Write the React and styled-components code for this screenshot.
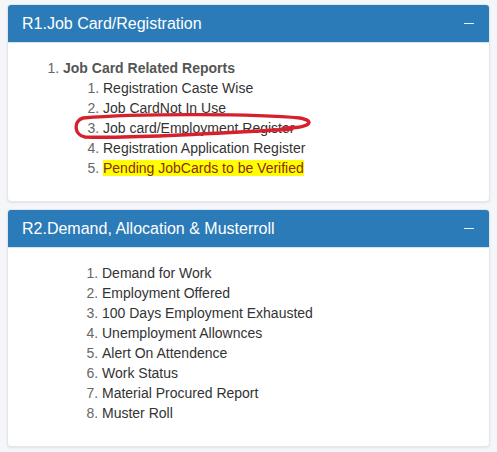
import React from 'react';
import styled, { createGlobalStyle } from 'styled-components';

const GlobalStyle = createGlobalStyle`
  body {
    margin: 0;
    background: #f4f6f9;
    font-family: "Liberation Sans", Arial, sans-serif;
    font-size: 14px;
    color: #333;
  }
`;

const Page = styled.div`
  padding: 4px 7px 4px 7px;
  display: flex;
  flex-direction: column;
  gap: 7px;
`;

const Panel = styled.div`
  background: #fff;
  border: 1px solid #e3e6ea;
  border-radius: 4px;
  box-shadow: 0 1px 2px rgba(0, 0, 0, 0.08);
  overflow: hidden;
`;

const Heading = styled.div`
  background: #2b7bb9;
  color: #fff;
  display: flex;
  align-items: center;
  justify-content: space-between;
  padding: 10px 15px 10px 14px;
  border-bottom: 1px solid #d6e4f0;
`;

const Title = styled.h3`
  margin: 0;
  font-size: 16px;
  font-weight: normal;
  line-height: 17px;
`;

const Minus = styled.span`
  display: block;
  width: 10px;
  height: 1px;
  background: #e8f1f8;
`;

const Body = styled.div`
  position: relative;
  padding: 15px 15px 23px 15px;
`;

const List = styled.ol`
  margin: 0;
  padding-left: ${(p) => p.$indent}px;
  line-height: 20px;
  li::marker {
    color: #666;
  }
`;

const Item = styled.li``;

const Group = styled.li`
  & > span {
    font-weight: bold;
    color: #555;
  }
`;

const Highlight = styled.span`
  background: #ffff00;
  color: #8b2a12;
`;

const Scribble = styled.svg`
  position: absolute;
  left: -8px;
  top: -42px;
  pointer-events: none;
`;

const RedCircle = () => (
  <Scribble width="497" height="200" viewBox="0 0 497 200">
    <path
      d="M 292 128 C 240 131, 130 138, 85 136 C 74 134, 73 120, 83 117 C 140 112, 260 113, 300 117 C 316 120, 311 127, 283 127"
      fill="none"
      stroke="#d6202c"
      strokeWidth="3.4"
      strokeLinecap="round"
    />
  </Scribble>
);

const registration = [
  'Registration Caste Wise',
  'Job CardNot In Use',
  'Job card/Employment Register',
  'Registration Application Register',
];

const demand = [
  'Demand for Work',
  'Employment Offered',
  '100 Days Employment Exhausted',
  'Unemployment Allownces',
  'Alert On Attendence',
  'Work Status',
  'Material Procured Report',
  'Muster Roll',
];

export default function App() {
  return (
    <>
      <GlobalStyle />
      <Page>
        <Panel>
          <Heading>
            <Title>R1.Job Card/Registration</Title>
            <Minus />
          </Heading>
          <Body>
            <List $indent={40}>
              <Group>
                <span>Job Card Related Reports</span>
                <List $indent={40}>
                  {registration.map((r) => (
                    <Item key={r}>{r}</Item>
                  ))}
                  <Item>
                    <Highlight>Pending JobCards to be Verified</Highlight>
                  </Item>
                </List>
              </Group>
            </List>
            <RedCircle />
          </Body>
        </Panel>
        <Panel>
          <Heading>
            <Title>R2.Demand, Allocation &amp; Musterroll</Title>
            <Minus />
          </Heading>
          <Body>
            <List $indent={79}>
              {demand.map((d) => (
                <Item key={d}>{d}</Item>
              ))}
            </List>
          </Body>
        </Panel>
      </Page>
    </>
  );
}
